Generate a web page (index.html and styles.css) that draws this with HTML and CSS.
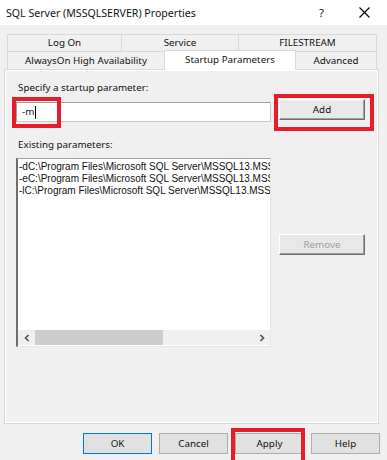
FILE: index.html
```html
<!DOCTYPE html>
<html>
<head>
<meta charset="utf-8">
<link rel="stylesheet" href="styles.css">
</head>
<body>
<div class="window">
  <div class="titlebar">
    <span class="title">SQL Server (MSSQLSERVER) Properties</span>
    <span class="help-q">?</span>
    <span class="close">
      <svg width="11" height="11" viewBox="0 0 11 11"><path d="M0.5 0.5 L10.5 10.5 M10.5 0.5 L0.5 10.5" stroke="#000" stroke-width="1.1" fill="none"/></svg>
    </span>
  </div>
  <div class="body">
    <div class="tabs">
      <div class="tabrow row1">
        <div class="tab t-logon">Log On</div>
        <div class="tab t-service">Service</div>
        <div class="tab t-filestream">FILESTREAM</div>
      </div>
      <div class="tabrow row2">
        <div class="tab t-always">AlwaysOn High Availability</div>
        <div class="tab t-startup selected">Startup Parameters</div>
        <div class="tab t-advanced">Advanced</div>
      </div>
    </div>
    <div class="panel">
      <div class="label">Specify a startup parameter:</div>
      <div class="param-row">
        <div class="input">-m<span class="caret"></span></div>
        <div class="btn3d add">Add</div>
      </div>
      <div class="label label-existing">Existing parameters:</div>
      <div class="list-row">
        <div class="listbox">
          <div class="list-items">
            <div class="item">-dC:\Program Files\Microsoft SQL Server\MSSQL13.MSSQLSERVER\MSSQL\DATA\master.mdf</div>
            <div class="item">-eC:\Program Files\Microsoft SQL Server\MSSQL13.MSSQLSERVER\MSSQL\Log\ERRORLOG</div>
            <div class="item">-lC:\Program Files\Microsoft SQL Server\MSSQL13.MSSQLSERVER\MSSQL\DATA\mastlog.ldf</div>
          </div>
          <div class="hscroll">
            <span class="arrow">
              <svg width="8" height="8" viewBox="0 0 8 8"><path d="M5.5 1 L2.5 4 L5.5 7" stroke="#505050" stroke-width="1.6" fill="none"/></svg>
            </span>
            <div class="track"><div class="thumb"></div></div>
            <span class="arrow">
              <svg width="8" height="8" viewBox="0 0 8 8"><path d="M2.5 1 L5.5 4 L2.5 7" stroke="#505050" stroke-width="1.6" fill="none"/></svg>
            </span>
          </div>
        </div>
        <div class="side">
          <div class="btn3d remove">Remove</div>
        </div>
      </div>
    </div>
    <div class="footer">
      <div class="btn default">OK</div>
      <div class="btn">Cancel</div>
      <div class="btn">Apply</div>
      <div class="btn">Help</div>
    </div>
  </div>
  <div class="mark mark-m"></div>
  <div class="mark mark-add"></div>
  <div class="mark mark-apply"></div>
</div>
</body>
</html>
```

FILE: styles.css
```css
* { box-sizing: border-box; }
html, body { margin: 0; padding: 0; }
body {
  width: 387px;
  height: 460px;
  overflow: hidden;
  background: #f0f0f0;
  font-family: "Noto Sans", "Open Sans", sans-serif;
  font-size: 9.8px;
  color: #111;
}
.window {
  position: relative;
  width: 387px;
  height: 460px;
}
.titlebar {
  height: 25px;
  background: #fff;
  display: flex;
  align-items: center;
  padding-left: 6px;
}
.title {
  font-size: 10.6px;
  flex: 1;
}
.help-q {
  font-size: 11.5px;
  width: 14px;
  margin-right: 26px;
}
.close {
  display: flex;
  margin-right: 17px;
}
.body {
  padding: 9px 0 0 4px;
}
.tabs {
  margin-left: 3px;
  width: 370px;
}
.tabrow {
  display: flex;
  align-items: flex-end;
}
.tab {
  height: 18px;
  border: 1px solid #d9d9d9;
  background: #f0f0f0;
  display: flex;
  align-items: center;
  justify-content: center;
  margin-left: -1px;
  line-height: 1;
  white-space: nowrap;
}
.tab:first-child { margin-left: 0; }
.row2 {
  margin-top: -1px;
  height: 18px;
}
.row2 .tab {
  border-bottom: none;
  height: 18px;
}
.t-logon { width: 115px; }
.t-service { width: 118px; }
.t-filestream { width: 139px; }
.t-always { width: 158px; }
.t-startup { width: 132px; }
.t-advanced { width: 82px; }
.tab.selected {
  background: #fff;
  height: 20px;
  margin-bottom: -1px;
  position: relative;
  z-index: 1;
  padding-bottom: 2px;
}
.panel {
  width: 375px;
  height: 355px;
  border: 1px solid #d9d9d9;
  box-shadow: inset 0 0 0 1px #fff;
  background: #f0f0f0;
  padding: 10px 0 0 11px;
}
.label {
  height: 15px;
  line-height: 15px;
  padding-left: 2px;
}
.param-row {
  display: flex;
  align-items: flex-start;
  margin-top: 4px;
}
.input {
  margin-top: 3px;
  width: 255px;
  height: 20px;
  background: #fff;
  border: 1px solid #c8c8c8;
  border-top-color: #a0a0a0;
  border-left-color: #a0a0a0;
  padding-left: 5px;
  line-height: 18px;
  display: flex;
  align-items: center;
}
.caret {
  display: inline-block;
  width: 1px;
  height: 13px;
  background: #000;
  margin-left: 1px;
}
.btn3d {
  width: 86px;
  height: 21px;
  margin-left: 8px;
  background: #e8e8e8;
  border: 1px solid #fff;
  border-right-color: #6d6d6d;
  border-bottom-color: #6d6d6d;
  box-shadow: inset -1px -1px 0 #a0a0a0;
  display: flex;
  align-items: center;
  justify-content: center;
}
.label-existing {
  margin-top: 15px;
}
.list-row {
  display: flex;
  align-items: flex-start;
  margin-top: 6px;
}
.listbox {
  width: 255px;
  height: 189px;
  background: #fff;
  border: 1px solid #e6e6e6;
  border-top-color: #a0a0a0;
  border-left: 2px solid #6e6e6e;
  display: flex;
  flex-direction: column;
  overflow: hidden;
}
.list-items {
  flex: 1;
  padding: 2px 0 0 1px;
  font-family: "Liberation Sans", Arial, sans-serif;
  font-size: 10px;
  line-height: 12px;
  overflow: hidden;
}
.item { white-space: nowrap; }
.hscroll {
  height: 15px;
  background: #f0f0f0;
  display: flex;
  align-items: stretch;
  margin-bottom: 1px;
}
.arrow {
  width: 17px;
  display: flex;
  align-items: center;
  justify-content: center;
}
.track {
  flex: 1;
  display: flex;
  align-items: stretch;
}
.thumb {
  width: 128px;
  background: #cdcdcd;
}
.side {
  margin-top: 76px;
}
.remove {
  color: #a0a0a0;
}
.footer {
  display: flex;
  gap: 7px;
  margin-top: 9px;
  padding-left: 79px;
}
.btn {
  width: 69px;
  height: 21px;
  background: #e1e1e1;
  border: 1px solid #adadad;
  display: flex;
  align-items: center;
  justify-content: center;
}
.btn.default {
  border-color: #0078d7;
}
.mark {
  position: absolute;
  border: 4px solid #e61e2b;
}
.mark-m { left: 12px; top: 97px; width: 49px; height: 31px; }
.mark-add { left: 274px; top: 94px; width: 100px; height: 37px; }
.mark-apply { left: 231px; top: 428px; width: 74px; height: 36px; }
```
